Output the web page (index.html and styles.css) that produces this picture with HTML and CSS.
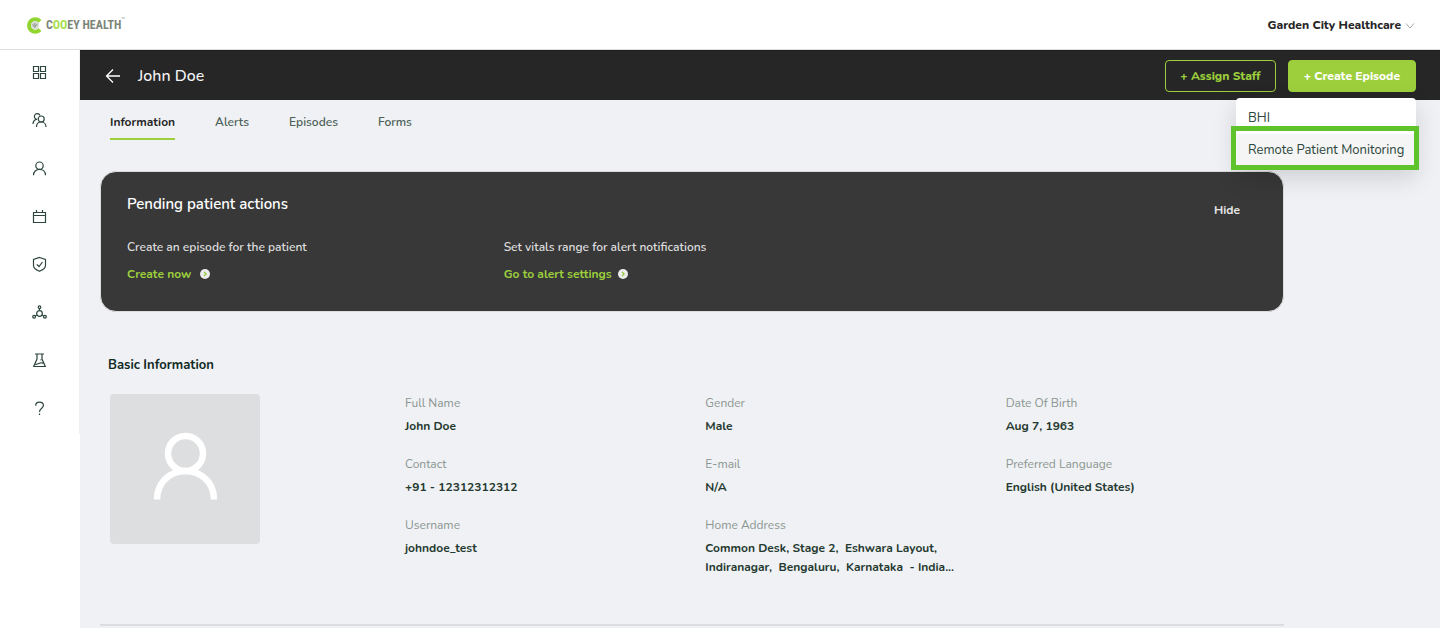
FILE: index.html
```html
<!DOCTYPE html>
<html lang="en">
<head>
<meta charset="utf-8">
<meta name="viewport" content="width=device-width, initial-scale=1">
<title>John Doe - Cooey Health</title>
<link rel="stylesheet" href="styles.css">
</head>
<body>
<header class="topbar">
  <a class="logo" href="#" aria-label="Cooey Health">
    <svg class="logo-mark" viewBox="0 0 17 17" aria-hidden="true">
      <path d="M14 4.300A6.300 6.300 0 1 0 14 12.700" fill="none" stroke="#93d52f" stroke-width="4"/>
      <circle cx="9" cy="8.300" r="4" fill="#d7dbd2"/>
      <path d="M6.600 7.200l2.200 3.200 2.400-3.600M8.800 6v3" fill="none" stroke="#8d9688" stroke-width="1"/>
    </svg>
    <span class="logo-text">C<span class="logo-accent">OO</span>EY HEALTH</span><span class="logo-tm">™</span>
  </a>
  <button class="org" type="button">Garden City Healthcare
    <svg class="org-arrow" viewBox="0 0 10 10" aria-hidden="true"><path d="M1 2.500l4 4.500 4-4.500"/></svg>
  </button>
</header>
<div class="layout">
  <aside class="sidebar">
    <nav class="side-nav" aria-label="Main">
      <a class="side-link" href="#" aria-label="Dashboard"><svg viewBox="0 0 16 16"><path d="M2.500 2.500h5v5h-5zM9.500 2.500h5v5h-5zM2.500 9.500h5v5h-5zM9.500 9.500h5v5h-5z"/></svg></a>
      <a class="side-link" href="#" aria-label="Patients"><svg viewBox="0 0 16 16"><circle cx="10.200" cy="7" r="3"/><path d="M5.500 15c0-3 2-5 4.700-5s4.800 2 4.800 5M9 3.500A2.900 2.900 0 1 0 5.200 7.200M6 7.100C3.500 7.700 2 9.300 2 12"/></svg></a>
      <a class="side-link" href="#" aria-label="Staff"><svg viewBox="0 0 16 16"><circle cx="8.500" cy="5.700" r="3.700"/><path d="M2.500 15.300C2.500 11.800 5.100 9.400 8.500 9.400s6 2.400 6 5.900"/></svg></a>
      <a class="side-link" href="#" aria-label="Calendar"><svg viewBox="0 0 16 16"><path d="M2.500 4.500h12v10h-12zM2.500 7.500h12M5.500 2v3M11.500 2v3"/></svg></a>
      <a class="side-link" href="#" aria-label="Security"><svg viewBox="0 0 16 16"><path d="M8.500 1.500l6 2V9.500c0 2.500-3 4.500-6 5.800-3-1.300-6-3.300-6-5.800v-6zM5.800 8.300l2.200 2.200L11.500 6"/></svg></a>
      <a class="side-link" href="#" aria-label="Network"><svg viewBox="0 0 16 16"><circle cx="8.500" cy="3.200" r="1.300"/><circle cx="8.500" cy="9.500" r="2.800"/><circle cx="3.100" cy="12.800" r="1.400"/><circle cx="13.900" cy="12.800" r="1.400"/><path d="M8.500 4.500v2.200M6.100 11l-1.800 1M10.900 11l1.800 1"/></svg></a>
      <a class="side-link" href="#" aria-label="Lab"><svg viewBox="0 0 16 16"><path d="M4 2h9M6 2v5l-3.300 7.500h11.600L11 7V2M4 12c2 1 3.500-.5 5-1 1.500-.5 2.500-.2 3.700.2M9.500 7.800h.8"/></svg></a>
      <a class="side-link" href="#" aria-label="Help"><svg viewBox="0 0 16 16"><path d="M4.700 5.700C4.700 3.500 6.300 2.200 8.500 2.200s3.900 1.300 3.900 3.400C12.400 8.400 8.500 8.200 8.500 12M8.500 13.500v1.500"/></svg></a>
    </nav>
  </aside>
  <div class="page">
    <div class="titlebar">
      <a class="back" href="#" aria-label="Back"><svg viewBox="0 0 16 16"><path d="M15 8H2M8 1.500L1.500 8 8 14.500"/></svg></a>
      <h1 class="patient">John Doe</h1>
      <button class="btn btn-outline" type="button">+ Assign Staff</button>
      <div class="create">
        <button class="btn btn-solid" type="button" aria-haspopup="menu" aria-expanded="true">+ Create Episode</button>
        <div class="menu" role="menu">
          <button class="menu-item" type="button" role="menuitem">BHI</button>
          <button class="menu-item menu-item-active" type="button" role="menuitem">Remote Patient Monitoring</button>
          <span class="menu-frame"></span>
        </div>
      </div>
    </div>
    <nav class="tabs" aria-label="Patient sections">
      <a class="tab tab-active" href="#">Information</a>
      <a class="tab" href="#">Alerts</a>
      <a class="tab" href="#">Episodes</a>
      <a class="tab" href="#">Forms</a>
    </nav>
    <main class="content">
      <section class="pending">
        <div class="pending-head">
          <h2 class="pending-title">Pending patient actions</h2>
          <button class="hide" type="button">Hide</button>
        </div>
        <div class="actions">
          <div class="action">
            <p class="action-text">Create an episode for the patient</p>
            <a class="action-link action-link-wide" href="#">Create now <svg viewBox="0 0 10 10"><circle cx="5" cy="5" r="5"/><path d="M4 2.800L6.200 5 4 7.200"/></svg></a>
          </div>
          <div class="action">
            <p class="action-text">Set vitals range for alert notifications</p>
            <a class="action-link" href="#">Go to alert settings <svg viewBox="0 0 10 10"><circle cx="5" cy="5" r="5"/><path d="M4 2.800L6.200 5 4 7.200"/></svg></a>
          </div>
        </div>
      </section>
      <section class="basic">
        <h2 class="basic-title">Basic Information</h2>
        <div class="basic-body">
          <div class="avatar"><svg viewBox="0 0 64 68" aria-hidden="true"><circle cx="32.500" cy="21.500" r="17.500"/><path d="M4 67.500C4 51 16.500 39 32.500 39S61 51 61 67.500"/></svg></div>
          <dl class="fields">
            <div class="field"><dt>Full Name</dt><dd>John Doe</dd></div>
            <div class="field"><dt>Gender</dt><dd>Male</dd></div>
            <div class="field"><dt>Date Of Birth</dt><dd>Aug 7, 1963</dd></div>
            <div class="field"><dt>Contact</dt><dd>+91 - 12312312312</dd></div>
            <div class="field"><dt>E-mail</dt><dd>N/A</dd></div>
            <div class="field"><dt>Preferred Language</dt><dd>English (United States)</dd></div>
            <div class="field"><dt>Username</dt><dd>johndoe_test</dd></div>
            <div class="field"><dt>Home Address</dt><dd>Common Desk, Stage 2,&nbsp; Eshwara Layout,<br>Indiranagar,&nbsp; Bengaluru,&nbsp; Karnataka&nbsp; - India...</dd></div>
          </dl>
        </div>
      </section>
    </main>
  </div>
</div>
</body>
</html>
```
FILE: styles.css
```css
* { box-sizing: border-box; }

body {
  margin: 0;
  min-height: 100vh;
  display: flex;
  flex-direction: column;
  background: #f0f1f5;
  color: #24392f;
  font-family: Nunito, Lato, "Open Sans", sans-serif;
  font-size: 12px;
  line-height: 19px;
}

h1, h2, p, dl, dd { margin: 0; }
a { color: inherit; text-decoration: none; }
button { font: inherit; color: inherit; border: 0; background: none; padding: 0; cursor: pointer; }
svg { display: block; }

.topbar {
  height: 50px;
  padding: 2px 25px 0 26px;
  display: flex;
  align-items: center;
  justify-content: space-between;
  background: #fff;
  border-bottom: 1px solid #dcdcdc;
}
.logo { display: flex; align-items: center; }
.logo-mark { width: 17px; height: 17px; margin-right: 3px; }
.logo-text {
  font-family: "Roboto Condensed", Roboto, sans-serif;
  font-size: 12px;
  font-weight: 700;
  color: #7d8579;
}
.logo-accent { color: #a5e04a; }
.logo-tm { font-size: 4px; line-height: 6px; align-self: flex-start; color: #7d8579; }
.org {
  display: flex;
  align-items: center;
  gap: 4px;
  color: #262626;
  font-weight: 800;
}
.org-arrow { width: 10px; height: 10px; fill: none; stroke: #a6a6a6; stroke-width: 1; }

.layout { flex: 1; display: flex; }

.sidebar { width: 80px; flex: none; background: #fff; }
.side-nav {
  display: flex;
  flex-direction: column;
  border-right: 1px solid #f0f0f0;
}
.side-link { height: 48px; padding: 0 1px 4px 0; display: grid; place-items: center; }
.side-link svg { width: 16px; height: 16px; fill: none; stroke: #2c463b; stroke-width: 1.2; }

.page { flex: 1; min-width: 0; }

.titlebar {
  height: 50px;
  padding: 0 24px 0 25px;
  display: flex;
  align-items: center;
  background: #262626;
  color: #f5f5f5;
  border-top: 1px solid #1f1f1f;
}
.back svg { width: 16px; height: 16px; fill: none; stroke: #fff; stroke-width: 1.3; }
.patient { flex: 1; margin-left: 17px; font-size: 16px; font-weight: 500; line-height: 24px; }
.btn { height: 32px; padding: 1px 15px 0; border: 1px solid #9dcf3c; border-radius: 4px; font-weight: 800; }
.btn-outline { padding: 1px 14px 0; color: #9dcf3c; }
.btn-solid { background: #9dcf3c; color: #fff; }
.create { position: relative; margin-left: 12px; }
.menu {
  position: absolute;
  top: 38px;
  right: 0;
  width: 180px;
  padding: 4px 0;
  background: #fff;
  border-radius: 4px;
  box-shadow: 0 8px 24px rgba(0, 0, 0, 0.14);
  z-index: 2;
}
.menu-item {
  display: block;
  width: 100%;
  height: 32px;
  padding: 2px 12px 0;
  text-align: left;
  white-space: nowrap;
  font-size: 13px;
  color: #2c463b;
}
.menu-item-active { background: #f5f5f5; }
.menu-frame {
  position: absolute;
  inset: 28px -3px 0 -5px;
  border: 5px solid #5fc42c;
  pointer-events: none;
}

.tabs {
  display: flex;
  gap: 40px;
  height: 40px;
  padding: 0 30px;
  border-bottom: 1px solid #eeeff3;
}
.tab { height: 40px; padding-top: 13px; font-weight: 600; color: #4c6157; }
.tab-active { font-weight: 700; color: #262626; border-bottom: 2px solid #9dcf3c; }

.content { padding: 31px 156px 0 20px; }

.pending {
  padding: 20px 26px 27px;
  background: #383838;
  border: 1px solid #dcdcdc;
  border-radius: 16px;
}
.pending-head { display: flex; justify-content: space-between; align-items: flex-start; }
.pending-title { font-size: 15px; line-height: 24px; font-weight: 600; color: #fff; }
.hide { margin: 9px 17px 0 0; font-weight: 700; color: #e6e6e6; }
.actions { display: grid; grid-template-columns: repeat(3, 1fr); margin-top: 18px; }
.action-text { font-weight: 600; color: #dedede; }
.action-link {
  display: flex;
  align-items: center;
  gap: 6px;
  margin-top: 8px;
  font-weight: 700;
  color: #9dcf3c;
}
.action-link-wide { gap: 9px; }
.action-link svg { width: 10px; height: 10px; margin-bottom: 1px; fill: #ececec; }
.action-link path { fill: none; stroke: #8cc62c; stroke-width: 1.2; }

.basic { padding: 43px 0 47px; border-bottom: 2px solid #dcdde0; }
.basic-title { margin-left: 8px; font-size: 13px; line-height: 20px; font-weight: 700; color: #0f2a1f; }
.basic-body { display: flex; gap: 145px; margin: 19px 0 0 10px; }
.avatar {
  flex: none;
  width: 150px;
  height: 150px;
  padding-top: 38px;
  display: flex;
  justify-content: center;
  align-items: flex-start;
  background: #dddee0;
  border-radius: 4px;
}
.avatar svg { width: 64px; height: 68px; fill: none; stroke: #fff; stroke-width: 6.500; }
.fields {
  flex: 1;
  display: grid;
  grid-template-columns: repeat(3, 1fr);
  gap: 19px 22px;
  align-content: start;
}
.field dt { color: #8a9690; line-height: 19px; }
.field dd { margin-top: 4px; font-weight: 700; }
```
